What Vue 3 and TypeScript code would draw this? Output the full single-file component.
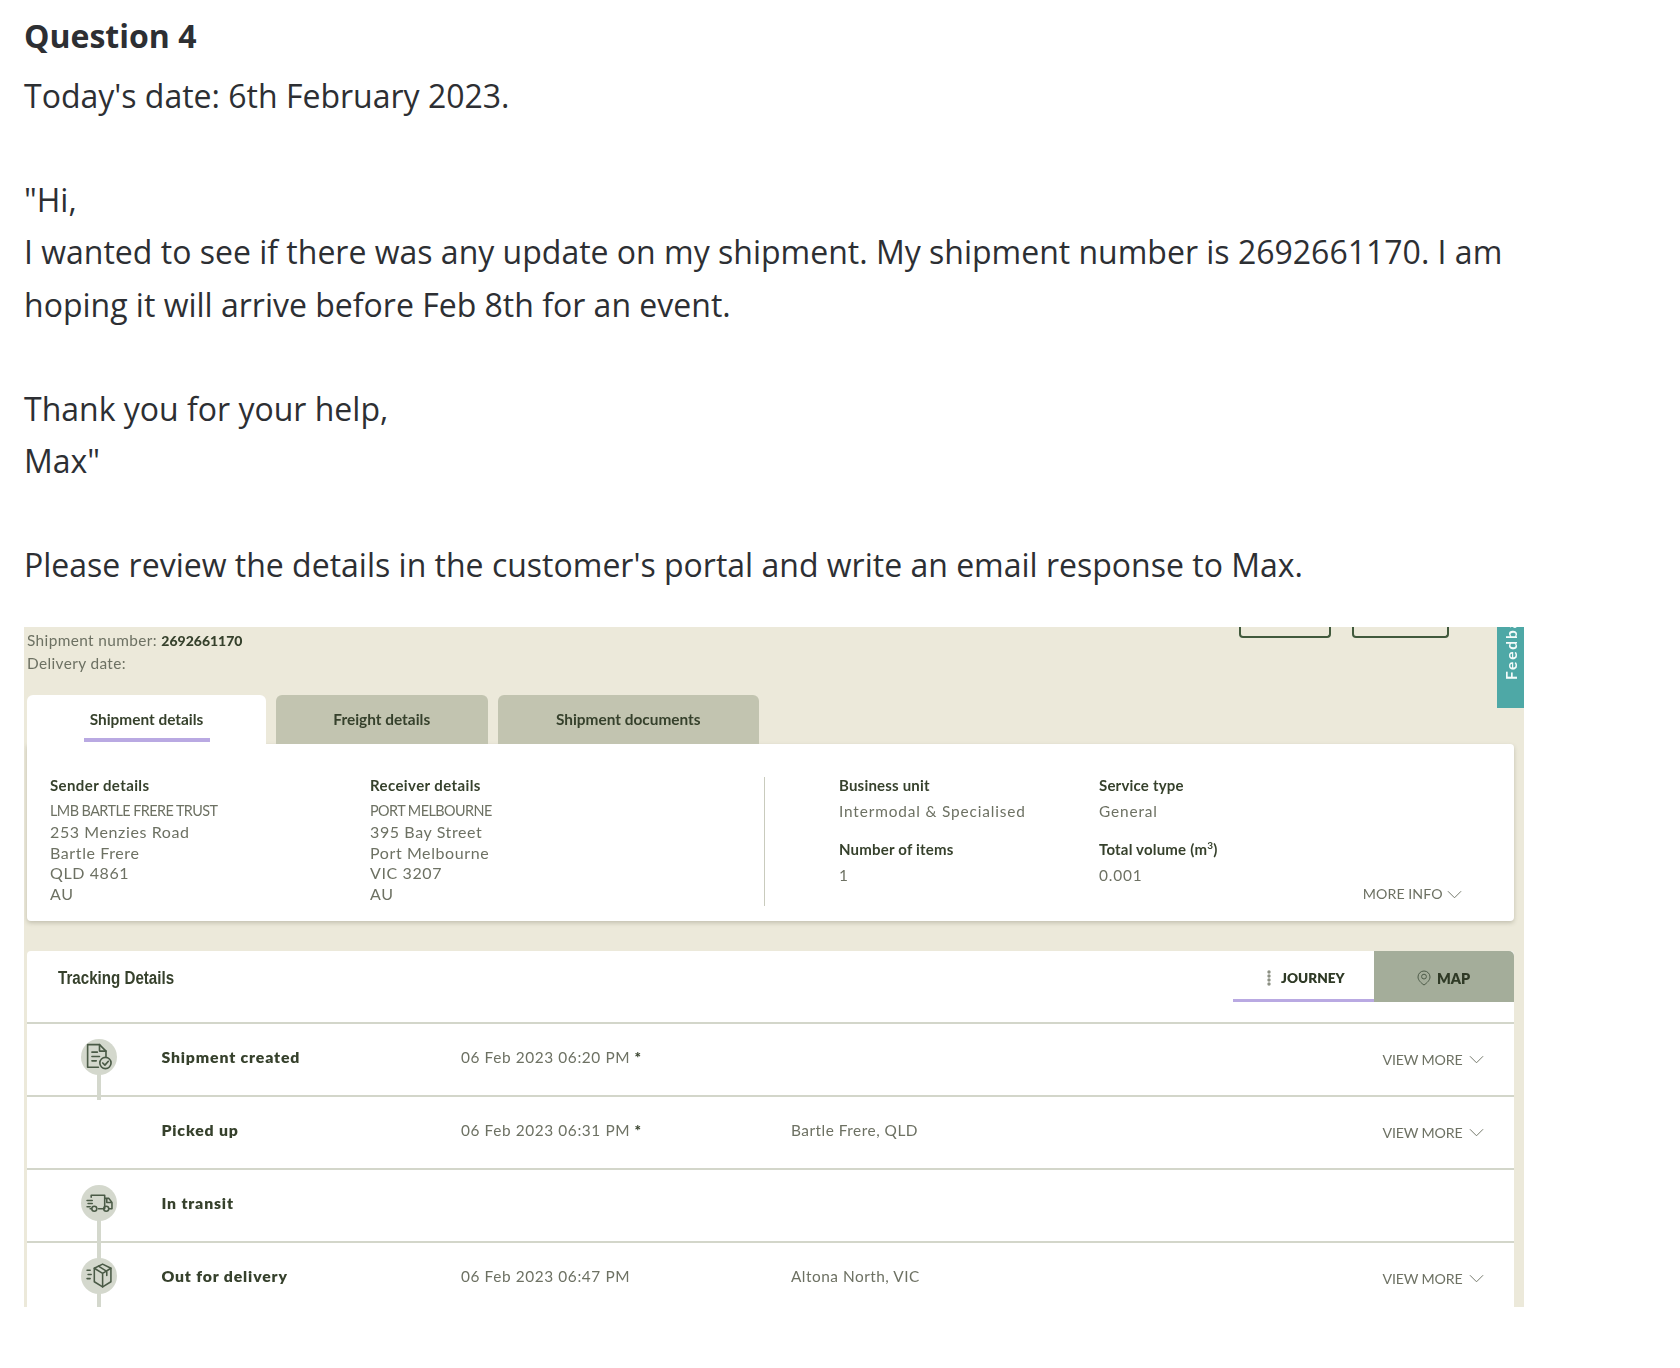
<script setup lang="ts">
interface Row {
  label: string
  date: string
  star: boolean
  place: string
  more: boolean
  icon: '' | 'doc' | 'truck' | 'box'
  line: '' | 'short' | 'long'
}
const rows: Row[] = [
  { label: 'Shipment created', date: '06 Feb 2023 06:20 PM', star: true, place: '', more: true, icon: 'doc', line: 'short' },
  { label: 'Picked up', date: '06 Feb 2023 06:31 PM', star: true, place: 'Bartle Frere, QLD', more: true, icon: '', line: '' },
  { label: 'In transit', date: '', star: false, place: '', more: false, icon: 'truck', line: 'long' },
  { label: 'Out for delivery', date: '06 Feb 2023 06:47 PM', star: false, place: 'Altona North, VIC', more: true, icon: 'box', line: 'long' },
]
const sender = ['253 Menzies Road', 'Bartle Frere', 'QLD 4861', 'AU']
const receiver = ['395 Bay Street', 'Port Melbourne', 'VIC 3207', 'AU']
</script>

<template>
  <div class="page">
    <h2 class="title">Question 4</h2>
    <p class="copy">
      Today's date: 6th February 2023.<br /><br />"Hi,<br />I wanted to see if there was any update on my shipment. My shipment number is 2692661170. I am<br />hoping it will arrive before Feb 8th for an event.<br /><br />Thank you for your help,<br />Max"<br /><br />Please review the details in the customer's portal and write an email response to Max.
    </p>

    <div class="portal">
      <div class="feedback"><span>Feedback</span></div>
      <header class="top">
        <div class="meta">
          <div>Shipment number: <b>2692661170</b></div>
          <div>Delivery date:</div>
        </div>
        <div class="stubs">
          <span class="stub stub-a"></span>
          <span class="stub stub-b"></span>
        </div>
      </header>

      <nav class="tabs">
        <div class="tab tab-one active"><span>Shipment details</span></div>
        <div class="tab tab-two"><span>Freight details</span></div>
        <div class="tab tab-three"><span>Shipment documents</span></div>
      </nav>

      <section class="details">
        <div class="party party-s">
          <h4>Sender details</h4>
          <div class="caps">LMB BARTLE FRERE TRUST</div>
          <div v-for="l in sender" :key="l">{{ l }}</div>
        </div>
        <div class="party party-r">
          <h4>Receiver details</h4>
          <div class="caps">PORT MELBOURNE</div>
          <div v-for="l in receiver" :key="l">{{ l }}</div>
        </div>
        <div class="facts">
          <div class="fact">
            <h4>Business unit</h4>
            <div>Intermodal &amp; Specialised</div>
          </div>
          <div class="fact">
            <h4>Service type</h4>
            <div>General</div>
          </div>
          <div class="fact">
            <h4>Number of items</h4>
            <div>1</div>
          </div>
          <div class="fact">
            <h4>Total volume (m<sup>3</sup>)</h4>
            <div>0.001</div>
          </div>
        </div>
        <div class="more-info">
          MORE INFO
          <svg class="chev" viewBox="0 0 16 9"><path d="M1 1l7 7 7-7" /></svg>
        </div>
      </section>

      <section class="tracking">
        <header class="track-head">
          <h3>Tracking Details</h3>
          <div class="switch">
            <div class="sw sw-journey">
              <svg class="dots" viewBox="0 0 6 16"><circle cx="3" cy="2" r="1.7" /><circle cx="3" cy="6" r="1.7" /><circle cx="3" cy="10" r="1.7" /><circle cx="3" cy="14" r="1.7" /></svg>
              JOURNEY
            </div>
            <div class="sw sw-map">
              <svg class="pin" viewBox="0 0 14 16"><path d="M7 15C4 13 1 10 1 7a6 6 0 0 1 12 0c0 3-3 6-6 8z" /><circle cx="7" cy="6.6" r="2.4" /></svg>
              MAP
            </div>
          </div>
        </header>

        <div v-for="r in rows" :key="r.label" class="row">
          <div class="icon-cell">
            <div v-if="r.icon" class="dot" :class="r.line">
              <svg v-if="r.icon === 'doc'" class="ico" viewBox="1.5 0.5 25 25">
                <path d="M13 23H3V2h11l6 6v5" />
                <path d="M14 2v6h6M7 9h5M7 13h7M7 17h4" />
                <circle cx="19.5" cy="19" r="5.2" />
                <path d="M17 19l2 2 3.2-3.6" />
              </svg>
              <svg v-else-if="r.icon === 'truck'" class="ico" viewBox="0 0 26 26">
                <path d="M5 8V6h13v13h-6M18 9h4l3 4v6h-3M5 19H4M18 19h-1" />
                <circle cx="8" cy="19" r="2.4" />
                <circle cx="19.5" cy="19" r="2.4" />
                <path d="M20 10v3h4M1 11h5M2 14h4M1 17h3" />
              </svg>
              <svg v-else class="ico" viewBox="0 0 26 26">
                <path d="M16 2l8 4v13l-8 5-8-5V6z" />
                <path d="M8 6l8 5 8-5M16 11v13M12 4l8 5v4" />
                <path d="M1 8h3M2 12h3M1 16h3" />
              </svg>
            </div>
          </div>
          <div class="label">{{ r.label }}</div>
          <div class="date">{{ r.date }}<span v-if="r.star" class="star"> *</span></div>
          <div class="place">{{ r.place }}</div>
          <div v-if="r.more" class="view-more">
            VIEW MORE
            <svg class="chev" viewBox="0 0 16 9"><path d="M1 1l7 7 7-7" /></svg>
          </div>
        </div>
      </section>
    </div>
  </div>
</template>

<style>
html,
body {
  margin: 0;
  background: #ffffff;
}
</style>

<style scoped>
.page {
  width: 1680px;
  height: 1368px;
  box-sizing: border-box;
  padding: 10px 0 0 24px;
  font-family: "Open Sans", "Liberation Sans", sans-serif;
  color: #2d2f33;
  overflow: hidden;
}
.title {
  margin: 0 0 8px;
  font-size: 32px;
  line-height: 52px;
  font-weight: 700;
}
.copy {
  margin: 0 0 35.5px;
  font-size: 32px;
  line-height: 52.15px;
  white-space: nowrap;
}
.portal {
  position: relative;
  width: 1500px;
  height: 680px;
  box-sizing: border-box;
  padding: 0 10.4px 0 3px;
  background: #ece9da;
  overflow: hidden;
  font-family: Lato, "Open Sans", sans-serif;
  color: #6d7163;
  font-size: 15.5px;
  filter: blur(0.55px);
}
.feedback {
  position: absolute;
  top: 0;
  right: 0;
  width: 27px;
  height: 81px;
  background: #4ea8a6;
  overflow: hidden;
}
.feedback span {
  position: absolute;
  left: 6px;
  top: 53px;
  color: #f4fbfa;
  font-weight: 700;
  font-size: 15.5px;
  letter-spacing: 1.9px;
  line-height: 16px;
  white-space: nowrap;
  transform-origin: 0 0;
  transform: rotate(-90deg);
}
.top {
  display: flex;
  justify-content: space-between;
  align-items: flex-start;
  height: 68px;
}
.meta {
  padding-top: 2px;
  font-size: 15.4px;
  line-height: 22px;
  letter-spacing: 0.38px;
}
.meta b {
  color: #36412c;
  font-weight: 900;
  font-size: 14px;
  letter-spacing: 0;
}
.stubs {
  display: flex;
  gap: 21px;
  margin-right: 65px;
}
.stub {
  display: block;
  height: 9px;
  border: 2px solid #41593c;
  border-top: 0;
  border-radius: 0 0 4px 4px;
  box-sizing: content-box;
}
.stub-a {
  width: 88px;
}
.stub-b {
  width: 93px;
}
.tabs {
  display: flex;
  gap: 10px;
  height: 49px;
}
.tab {
  display: flex;
  justify-content: center;
  padding-top: 14px;
  box-sizing: border-box;
  background: #c2c4b0;
  border-radius: 6px 6px 0 0;
  color: #36412c;
  font-weight: 700;
  font-size: 15.4px;
  line-height: 20px;
}
.tab-one {
  width: 239px;
  position: relative;
}
.tab-two {
  width: 211.5px;
}
.tab-three {
  width: 261.5px;
}
.active {
  background: #ffffff;
}
.active::after {
  content: "";
  position: absolute;
  left: 57px;
  width: 126px;
  top: 43px;
  height: 3.5px;
  background: #b9a9e2;
}
.details {
  display: flex;
  height: 177px;
  box-sizing: border-box;
  padding: 33px 0 15px 23px;
  background: #ffffff;
  border-radius: 0 4px 4px 4px;
  box-shadow: 0 2px 4px rgba(90, 90, 70, 0.28);
}
h4 {
  margin: -1px 0 0;
  color: #36412c;
  font-weight: 700;
  font-size: 15px;
  line-height: 18px;
}
h4 sup {
  font-size: 10px;
  line-height: 0;
}
.party {
  font-size: 16px;
  line-height: 20.8px;
  letter-spacing: 0.6px;
}
.party h4 {
  letter-spacing: 0.4px;
}
.party-s {
  width: 320px;
}
.party-r {
  width: 394px;
}
.caps {
  margin-top: 7px;
  font-size: 14.4px;
  letter-spacing: -0.55px;
}
.facts {
  display: grid;
  grid-template-columns: 260px 240px;
  grid-template-rows: 64px 65px;
  width: 424px;
  padding-left: 74px;
  border-left: 1.5px solid #c9cbbd;
  font-size: 15.4px;
  letter-spacing: 0.85px;
  line-height: 20px;
}
.facts h4 {
  letter-spacing: 0.2px;
}
.fact div {
  margin-top: 7px;
}
.more-info {
  align-self: flex-end;
  margin-left: auto;
  margin-right: 52px;
  margin-bottom: 2px;
  display: flex;
  align-items: center;
  gap: 4px;
  font-size: 14.2px;
  line-height: 20px;
  letter-spacing: 0.05px;
  white-space: nowrap;
}
.chev {
  width: 15px;
  height: 9px;
  fill: none;
  stroke: #6d7163;
  stroke-width: 1;
}
.tracking {
  margin-top: 30px;
  background: #ffffff;
  border-radius: 4px 4px 0 0;
  height: 400px;
}
.track-head {
  display: flex;
  justify-content: space-between;
  align-items: flex-start;
  height: 70.7px;
}
.track-head h3 {
  margin: 17px 0 0 31px;
  color: #36412c;
  font-family: "Liberation Sans", sans-serif;
  font-size: 17.5px;
  font-weight: 700;
  line-height: 20px;
  transform: scaleX(0.865);
  transform-origin: 0 50%;
}
.switch {
  display: flex;
}
.sw {
  display: flex;
  align-items: center;
  justify-content: center;
  height: 51px;
  box-sizing: border-box;
  color: #2f3a26;
  font-weight: 800;
  font-size: 13.6px;
}
.sw-journey {
  width: 140.6px;
  gap: 9px;
  padding: 6.4px 0 0 4px;
  border-bottom: 3.3px solid #b9a9e2;
}
.sw-map {
  width: 140px;
  gap: 6px;
  padding-top: 3px;
  background: #a4ad9a;
  border-radius: 0 5px 0 0;
  font-size: 14.4px;
}
.dots {
  width: 6px;
  height: 16px;
  fill: #8c9083;
}
.pin {
  width: 14px;
  height: 16px;
  fill: none;
  stroke: #4e5c49;
  stroke-width: 1;
}
.row {
  display: grid;
  grid-template-columns: 134.4px 299.6px 330px 1fr auto;
  align-items: center;
  height: 73px;
  box-sizing: border-box;
  padding: 0 30px 5px 0;
  border-top: 2px solid #d3d6ca;
}
.icon-cell {
  padding-left: 54px;
}
.dot {
  position: relative;
  width: 36px;
  height: 36px;
  border-radius: 50%;
  background: #d4d8cd;
  display: flex;
  align-items: center;
  justify-content: center;
}
.short::after,
.long::after {
  content: "";
  position: absolute;
  left: 16px;
  top: 35px;
  width: 4px;
  background: #d4d8cd;
}
.short::after {
  height: 26px;
}
.long::after {
  height: 46px;
}
.ico {
  width: 27px;
  height: 27px;
  fill: none;
  stroke: #4a5a46;
  stroke-width: 1.5;
  stroke-linejoin: round;
  stroke-linecap: round;
}
.label {
  color: #36412c;
  font-weight: 800;
  font-size: 15.8px;
  letter-spacing: 0.85px;
}
.date,
.place {
  font-size: 15.4px;
  letter-spacing: 0.5px;
}
.date {
  letter-spacing: 0.6px;
}
.star {
  color: #36412c;
  font-weight: 900;
}
.view-more {
  display: flex;
  align-items: center;
  gap: 6px;
  margin-top: 6px;
  font-size: 14.2px;
  letter-spacing: -0.15px;
  white-space: nowrap;
}
</style>
